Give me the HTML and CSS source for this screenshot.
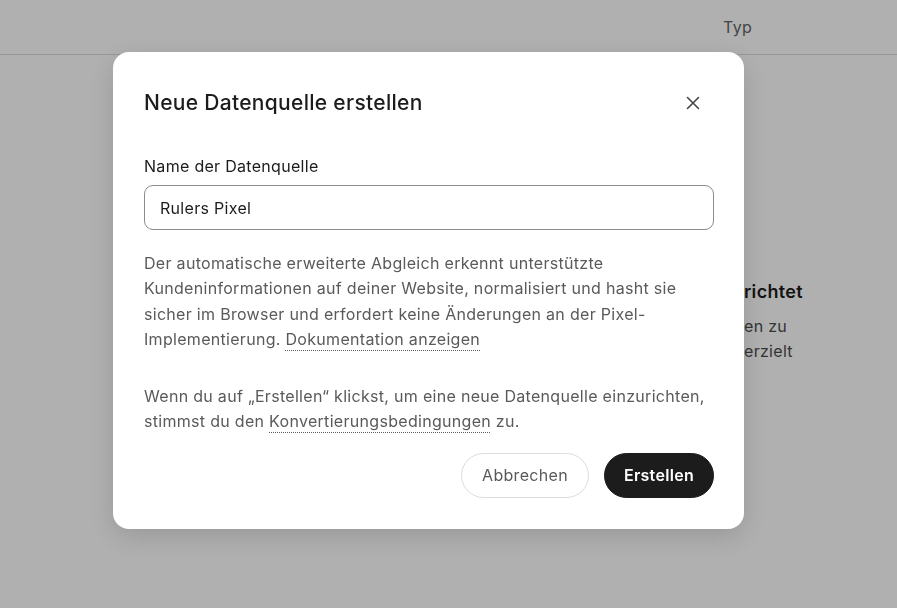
FILE: index.html
```html
<!DOCTYPE html>
<html lang="de">
<head>
    <meta charset="UTF-8">
    <meta name="viewport" content="width=device-width, initial-scale=1.0">
    <title>Neue Datenquelle erstellen</title>
    <link rel="stylesheet" href="styles.css">
</head>
<body>

    <header class="page-header">
        <span class="col-type">Typ</span>
    </header>

    <main class="page-main">
        <div class="empty-state">
            <span class="empty-hidden empty-title">Noch nichts einge</span>
            <span class="empty-title">richtet</span>
            <span class="empty-hidden">Nutze Pixel, um Conversi</span>
            <span>en zu</span>
            <span class="empty-hidden">und zu sehen, was du</span>
            <span>erzielt</span>
        </div>
    </main>

    <div class="overlay">
        <div class="modal" role="dialog" aria-labelledby="modal-title">
            <div class="modal-head">
                <h2 id="modal-title">Neue Datenquelle erstellen</h2>
                <button class="close-btn" aria-label="Schließen">
                    <svg width="16" height="16" viewBox="0 0 16 16" fill="none" stroke="#444" stroke-width="1.6" stroke-linecap="round">
                        <path d="M2.5 2.5 L13.5 13.5 M13.5 2.5 L2.5 13.5"/>
                    </svg>
                </button>
            </div>

            <label class="field-label" for="source-name">Name der Datenquelle</label>
            <input class="field-input" id="source-name" type="text" value="Rulers Pixel">

            <p class="modal-text">Der automatische erweiterte Abgleich erkennt unterstützte Kundeninformationen auf deiner Website, normalisiert und hasht sie sicher im Browser und erfordert keine Änderungen an der Pixel-Implementierung. <a href="#">Dokumentation anzeigen</a></p>

            <p class="modal-text terms">Wenn du auf „Erstellen“ klickst, um eine neue Datenquelle einzurichten, stimmst du den <a href="#">Konvertierungsbedingungen</a> zu.</p>

            <div class="modal-actions">
                <button class="btn btn-secondary">Abbrechen</button>
                <button class="btn btn-primary">Erstellen</button>
            </div>
        </div>
    </div>

</body>
</html>
```

FILE: styles.css
```css
body {
    font-family: Inter, "Noto Sans", sans-serif;
    letter-spacing: 0.3px;
    margin: 0;
    padding: 0;
    background-color: #fff;
    color: #1c1c1c;
    height: 100vh;
    overflow: hidden;
}

.page-header {
    display: flex;
    align-items: center;
    justify-content: flex-end;
    height: 54px;
    border-bottom: 1px solid #dcdcdc;
    padding: 0 24px;
    font-size: 16px;
    color: #646464;
}

.col-type {
    width: 150px;
    margin-bottom: 1px;
}

.page-main {
    padding-top: 225px;
    padding-left: 480px;
}

.empty-state {
    display: grid;
    grid-template-columns: 264px auto;
    font-size: 16px;
    line-height: 25px;
    color: #4c4c4c;
    white-space: nowrap;
}

.empty-hidden {
    text-align: right;
}

.empty-title {
    font-size: 18px;
    font-weight: 600;
    color: #1c1c1c;
    line-height: 24px;
    margin-bottom: 10px;
}

.overlay {
    position: fixed;
    inset: 0;
    background-color: rgba(0, 0, 0, 0.31);
    display: flex;
    align-items: flex-start;
    padding: 52px 0 0 113px;
}

.modal {
    width: 631px;
    box-sizing: border-box;
    padding: 32px 30px 31px 31px;
    background-color: #fff;
    border-radius: 16px;
    box-shadow: 0 8px 28px rgba(0, 0, 0, 0.14);
}

.modal-head {
    display: flex;
    align-items: center;
    justify-content: space-between;
    margin-bottom: 32px;
}

.modal-head h2 {
    margin: 0;
    font-size: 21px;
    font-weight: 500;
    line-height: 38px;
    color: #1c1c1c;
}

.close-btn {
    display: flex;
    align-items: center;
    justify-content: center;
    width: 32px;
    height: 32px;
    margin-right: 5px;
    padding: 0;
    border: none;
    background: none;
    cursor: pointer;
}

.field-label {
    display: block;
    font-size: 16px;
    line-height: 24px;
    color: #1c1c1c;
    margin-bottom: 7px;
}

.field-input {
    display: block;
    width: 100%;
    box-sizing: border-box;
    height: 45px;
    padding: 0 15px;
    border: 1px solid #8c8c8c;
    border-radius: 9px;
    font-family: inherit;
    font-size: 16px;
    letter-spacing: inherit;
    color: #1c1c1c;
    outline: none;
}

.modal-text {
    margin: 21px 0 0;
    font-size: 16px;
    line-height: 25.3px;
    color: #5a5a5a;
}

.modal-text a {
    color: inherit;
    text-decoration: underline dotted #5a5a5a;
    text-underline-offset: 5px;
    text-decoration-thickness: 1px;
}

.terms {
    margin-top: 32px;
}

.modal-actions {
    display: flex;
    justify-content: flex-end;
    gap: 15px;
    margin-top: 18px;
}

.btn {
    height: 45px;
    padding: 0 19px;
    border-radius: 23px;
    font-family: inherit;
    font-size: 16px;
    letter-spacing: inherit;
    cursor: pointer;
}

.btn-secondary {
    padding: 0 20px;
    background-color: #fff;
    border: 1px solid #dddddd;
    color: #5a5a5a;
}

.btn-primary {
    background-color: #1c1c1c;
    border: 1px solid #1c1c1c;
    color: #fff;
    font-weight: 600;
}
```
